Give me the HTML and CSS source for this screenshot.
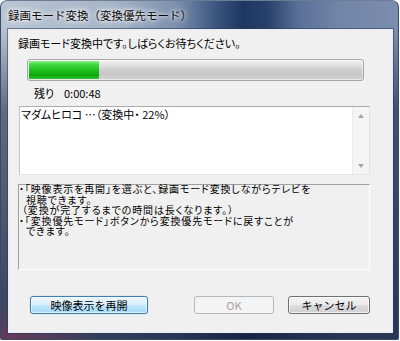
FILE: index.html
```html
<!DOCTYPE html>
<html lang="ja">
<head>
<meta charset="utf-8">
<link rel="stylesheet" href="styles.css">
</head>
<body>
<div class="window">
  <div class="titlebar"><span class="title">録画モード変換（変換優先モード）</span></div>
  <div class="client">
    <p class="msg">録画モード変換中です。しばらくお待ちください。</p>
    <div class="progress"><div class="progress-fill" style="width:21%"></div></div>
    <div class="remain"><span class="remain-label">残り</span><span class="remain-time">0:00:48</span></div>
    <div class="listbox">
      <div class="list-items"><div class="list-item">マダムヒロコ …（変換中・ 22%）</div></div>
      <div class="scrollbar"><span class="arrow arrow-up"></span><span class="arrow arrow-down"></span></div>
    </div>
    <div class="info">
      <div class="info-line">・「映像表示を再開」を選ぶと、録画モード変換しながらテレビを</div>
      <div class="info-line indent">視聴できます。</div>
      <div class="info-line indent-paren">（変換が完了するまでの時間は長くなります。）</div>
      <div class="info-line">・「変換優先モード」ボタンから変換優先モードに戻すことが</div>
      <div class="info-line indent">できます。</div>
    </div>
    <div class="buttons">
      <button class="btn btn-default">映像表示を再開</button>
      <button class="btn btn-ok" disabled>OK</button>
      <button class="btn btn-cancel">キャンセル</button>
    </div>
  </div>
</div>
</body>
</html>
```
FILE: styles.css
```css
* { box-sizing: border-box; }
html, body {
  margin: 0;
  padding: 0;
  background: #ffffff;
}
body {
  width: 400px;
  height: 341px;
  overflow: hidden;
  font-family: "Noto Sans CJK JP", sans-serif;
  font-size: 11px;
  color: #000;
  font-feature-settings: "palt";
}
.window {
  width: 399px;
  height: 340px;
  border-radius: 7px 7px 2px 2px;
  border: 1px solid #3a4a66;
  border-top-color: #6d7d96;
  padding: 0 5px 6px 7px;
  display: flex;
  flex-direction: column;
  background:
    radial-gradient(ellipse 90px 40px at 10px 340px, rgba(150, 50, 90, 0.55), rgba(150, 50, 90, 0) 100%),
    linear-gradient(180deg, rgba(18, 32, 62, 0) 0, rgba(18, 32, 62, 0) 28px, rgba(18, 32, 62, 0.55) 110px, rgba(18, 32, 62, 0.8) 100%),
    linear-gradient(90deg, #b9c5d3 0%, #a5b4c7 28%, #7c90ad 44%, #3d5680 54%, #1d3762 61%, #27416b 67%, #5a7098 75%, #7185a6 85%, #7a8dac 100%);
}
.titlebar {
  height: 28px;
  flex: none;
  display: flex;
  align-items: center;
  padding-left: 0;
}
.title {
  font-size: 11.5px;
  font-feature-settings: normal;
  color: #0a0a0a;
  text-shadow: 0 0 6px rgba(255, 255, 255, 0.95), 0 0 3px rgba(255, 255, 255, 0.9), 0 0 10px rgba(255, 255, 255, 0.7);
  line-height: 14px;
}
.client {
  flex: 1;
  background: #f0f0f0;
  border: 1px solid #e8ecf1;
  box-shadow: 0 0 0 1px rgba(40, 58, 90, 0.55);
  display: flex;
  flex-direction: column;
  align-items: flex-start;
}
.msg {
  margin: 6px 0 0 9px;
  line-height: 14px;
}
.progress {
  margin: 9px 0 0 18px;
  width: 337px;
  height: 22px;
  border: 1px solid #a6a6a6;
  border-radius: 3px;
  padding: 1px;
  background: linear-gradient(180deg, #f3f3f3 0%, #e2e2e2 25%, #d0d0d0 45%, #c6c6c6 75%, #d6d6d6 100%);
  box-shadow: inset 0 0 0 1px rgba(255, 255, 255, 0.5);
}
.progress-fill {
  height: 100%;
  border-radius: 1px;
  background: linear-gradient(180deg, #8ff08f 0%, #46d946 18%, #22c722 45%, #0ba70b 78%, #2cc42c 100%);
}
.remain {
  margin: 5px 0 0 25px;
  display: flex;
  line-height: 14px;
}
.remain-label { width: 30px; }
.listbox {
  margin: 6px 0 0 10px;
  width: 351px;
  height: 69px;
  background: #fff;
  border: 1px solid;
  border-color: #a9abb2 #dfe3e8 #e3e6ea #c2c5cb;
  display: flex;
}
.list-items {
  flex: 1;
  padding: 1px 0 0 1px;
}
.list-item {
  line-height: 13px;
}
.scrollbar {
  width: 17px;
  flex: none;
  background: #f5f5f5;
  border-left: 1px solid #ececec;
  display: flex;
  flex-direction: column;
  justify-content: space-between;
  align-items: center;
  padding: 7px 0 6px;
}
.arrow {
  width: 0;
  height: 0;
  border-left: 3.5px solid transparent;
  border-right: 3.5px solid transparent;
}
.arrow-up { border-bottom: 4px solid #a4a4a4; }
.arrow-down { border-top: 4px solid #a4a4a4; }
.info {
  margin: 9px 0 0 9px;
  width: 352px;
  height: 86px;
  border: 1px solid;
  border-color: #a0a0a0 #ffffff #ffffff #a0a0a0;
  padding: 0;
}
.info-line {
  font-family: "Liberation Sans", "Noto Sans CJK JP", sans-serif;
  font-size: 10px;
  letter-spacing: 0.85px;
  line-height: 10.5px;
  white-space: nowrap;
}
.indent { padding-left: 7px; }
.indent-paren { padding-left: 3px; }
.buttons {
  margin-top: 26px;
  width: 100%;
  display: flex;
  padding: 0 22px 0 21px;
}
.btn {
  height: 18px;
  font-family: "Noto Sans CJK JP", sans-serif;
  font-size: 11px;
  font-feature-settings: normal;
  line-height: 14px;
  padding: 0;
  border-radius: 3px;
  border: 1px solid #707070;
  color: #000;
  background: linear-gradient(180deg, #f2f2f2 0%, #ebebeb 48%, #dddddd 52%, #cfcfcf 100%);
  box-shadow: inset 0 0 0 1px rgba(255, 255, 255, 0.7);
}
.btn-default {
  width: 118px;
  border-color: #3c7fb1;
  background: linear-gradient(180deg, #eaf6fd 0%, #d9f0fc 48%, #bee6fd 52%, #a7d9f5 100%);
  box-shadow: inset 0 0 0 1px rgba(255, 255, 255, 0.6), 0 0 1px rgba(60, 127, 177, 0.6);
}
.btn-ok {
  width: 80px;
  margin-left: auto;
  border-color: #b6b9bc;
  background: #f4f4f4;
  color: #a3a3a3;
  box-shadow: none;
}
.btn-cancel {
  width: 82px;
  margin-left: 14px;
}
```
